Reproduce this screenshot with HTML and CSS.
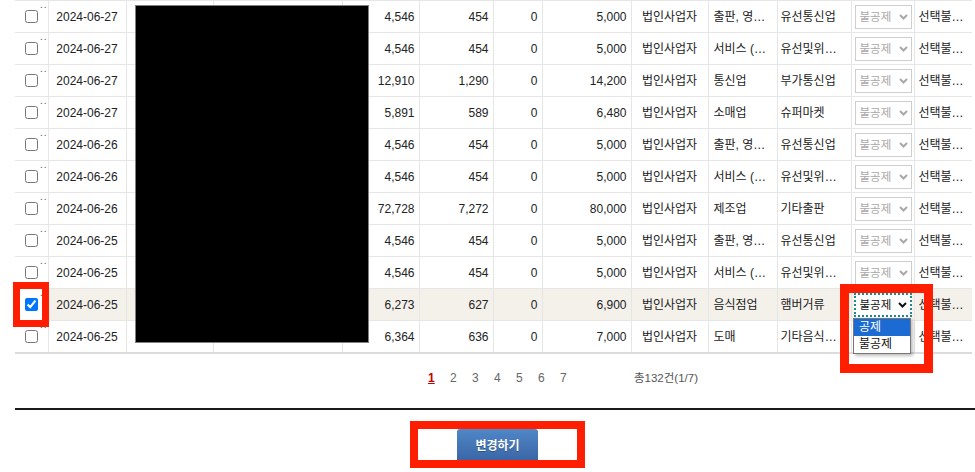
FILE: index.html
```html
<!DOCTYPE html>
<html>
<head>
    <title>매입 내역</title>
    <link rel="stylesheet" href="styles.css">
</head>
<body>
    <div class="wrap">
        <table class="list">
            <colgroup>
                <col style="width:33px"><col style="width:78px"><col style="width:87px"><col style="width:129px">
                <col style="width:77px"><col style="width:74px"><col style="width:49px"><col style="width:89px">
                <col style="width:77px"><col style="width:69px"><col style="width:74px"><col style="width:63px">
                <col style="width:58px">
            </colgroup>
            <tbody id="rows"></tbody>
        </table>

        <div class="pager">
            <a class="on">1</a><a>2</a><a>3</a><a>4</a><a>5</a><a>6</a><a>7</a>
            <span class="total">총132건(1/7)</span>
        </div>

        <div class="line"></div>

        <div class="actions">
            <div class="mark-btn"><button class="btn">변경하기</button></div>
        </div>

        <div class="mask"></div>
        <div class="opts">
            <div class="opt sel-on">공제</div>
            <div class="opt">불공제</div>
        </div>
        <div class="mark mark-chk"></div>
        <div class="mark mark-sel"></div>
    </div>

    <script>
        const rows = [
            ['2024-06-27', '4,546', '454', '0', '5,000', '출판, 영…', '유선통신업'],
            ['2024-06-27', '4,546', '454', '0', '5,000', '서비스 (…', '유선및위…'],
            ['2024-06-27', '12,910', '1,290', '0', '14,200', '통신업', '부가통신업'],
            ['2024-06-27', '5,891', '589', '0', '6,480', '소매업', '슈퍼마켓'],
            ['2024-06-26', '4,546', '454', '0', '5,000', '출판, 영…', '유선통신업'],
            ['2024-06-26', '4,546', '454', '0', '5,000', '서비스 (…', '유선및위…'],
            ['2024-06-26', '72,728', '7,272', '0', '80,000', '제조업', '기타출판'],
            ['2024-06-25', '4,546', '454', '0', '5,000', '출판, 영…', '유선통신업'],
            ['2024-06-25', '4,546', '454', '0', '5,000', '서비스 (…', '유선및위…'],
            ['2024-06-25', '6,273', '627', '0', '6,900', '음식점업', '햄버거류', 'active'],
            ['2024-06-25', '6,364', '636', '0', '7,000', '도매', '기타음식…', 'under']
        ];

        const chevron = '<svg width="9" height="6" viewBox="0 0 9 6"><polyline points="1,1 4.5,4.5 8,1" fill="none" stroke="currentColor" stroke-width="2"/></svg>';

        let html = '';
        rows.forEach(r => {
            const on = r[7] === 'active';
            // the last row's select sits under the open option list
            const selClass = on ? 'focus' : (r[7] === 'under' ? 'off hidden' : 'off');
            html += `<tr class="${on ? 'active' : ''}">
                <td class="chk"><div class="chk-in"><input type="checkbox" ${on ? 'checked' : ''}><span class="dots">..</span></div></td>
                <td class="c">${r[0]}</td>
                <td></td>
                <td></td>
                <td class="r">${r[1]}</td>
                <td class="r">${r[2]}</td>
                <td class="r">${r[3]}</td>
                <td class="r">${r[4]}</td>
                <td class="c">법인사업자</td>
                <td class="biz">${r[5]}</td>
                <td class="item">${r[6]}</td>
                <td class="pick"><div class="sel ${selClass}"><span class="sel-txt">불공제</span>${chevron}</div></td>
                <td class="note">선택불…</td>
            </tr>`;
        });
        document.getElementById('rows').innerHTML = html;
    </script>
</body>
</html>
```

FILE: styles.css
```css
body {
    margin: 0;
    font-family: "Liberation Sans", "Noto Sans CJK KR", sans-serif;
    font-size: 12px;
    color: #333;
    background: #fff;
}
.wrap { position: relative; padding-left: 15px; }

.list {
    width: 957px;
    table-layout: fixed;
    border-collapse: collapse;
    border-top: 1px solid #e6e6e6;
    border-bottom: 2px solid #dcdcdc;
}
.list td {
    height: 31px;
    padding: 0 4px;
    line-height: 14px;
    border-bottom: 1px solid #e6e6e6;
    border-left: 1px solid #e6e6e6;
    white-space: nowrap;
    overflow: hidden;
    color: #222;
}
.list td:first-child { border-left: 0; padding: 0; }
.list tr.active td { background: #f4f0ea; }
.list tr.active td.chk { background: #fff; }
.list td.c { text-align: center; }
.list td.r { text-align: right; padding-right: 4px; }
.list td.biz { padding-left: 5px; }
.list td.item { padding-left: 3px; }
.list td.pick { padding: 0 2px; }
.list td.note { padding-left: 4px; }

.chk-in { display: flex; align-items: center; height: 31px; padding-left: 10px; }
.chk-in input { margin: 0; width: 13px; height: 13px; }
.dots {
    align-self: flex-start;
    margin: 0 0 0 2px;
    font-size: 10px;
    line-height: 7px;
    height: 7px;
    letter-spacing: 1px;
    color: #555;
}

.sel {
    display: flex;
    align-items: center;
    justify-content: space-between;
    box-sizing: border-box;
    width: 57px;
    height: 24px;
    margin-left: 1px;
    padding: 0 3px 0 4px;
    border: 1px solid #cfcfcf;
    background: #fff;
}
.sel-txt { white-space: nowrap; font-size: 11.5px; }
.sel.off { color: #a8a8a8; }
.sel.hidden { visibility: hidden; }
.sel.focus {
    width: 58px;
    margin-left: 0;
    padding-left: 4px;
    border: 2px dotted #1b8a8f;
    color: #111;
}

.opts {
    position: absolute;
    left: 853px;
    top: 318px;
    width: 58px;
    box-sizing: border-box;
    border: 1px solid #767676;
    background: #fff;
    box-shadow: 2px 2px 3px rgba(0,0,0,0.25);
    font-size: 12px;
}
.opt { height: 17px; line-height: 17px; padding-left: 5px; color: #111; }
.opt.sel-on { background: #1c6bd3; color: #fff; }

.mask {
    position: absolute;
    left: 135px;
    top: 5px;
    width: 234px;
    height: 338px;
    box-sizing: border-box;
    background: #000;
    border: 1px solid #808080;
}

.mark { position: absolute; box-sizing: border-box; border: 7px solid #ff1e00; }
.mark-chk { left: 13px; top: 282px; width: 36px; height: 45px; }
.mark-sel { left: 840px; top: 284px; width: 93px; height: 89px; border-width: 9px; }

.pager {
    display: flex;
    margin-top: 16px;
    padding-left: 413px;
    height: 16px;
    line-height: 16px;
    color: #666;
}
.pager a { display: inline-block; width: 22px; cursor: pointer; }
.pager a.on { color: #c40000; font-weight: bold; text-decoration: underline; }
.pager .total { margin-left: 52px; font-size: 11.5px; color: #555; }

.line { margin-top: 22px; border-top: 2px solid #1a1a1a; }

.actions { display: flex; margin-top: 11px; padding-left: 395px; }
.mark-btn { border: 8px solid #ff1e00; padding: 0 39px; height: 31px; }
.btn {
    display: block;
    width: 81px;
    height: 31px;
    border: 0;
    border-radius: 3px 3px 0 0;
    background: linear-gradient(#5087c7, #3a66a6);
    color: #fff;
    font-family: "Liberation Sans", "Noto Sans CJK KR", sans-serif;
    font-size: 12px;
    font-weight: bold;
    text-shadow: 0 1px 0 rgba(0,0,0,0.25);
    cursor: pointer;
}
```
